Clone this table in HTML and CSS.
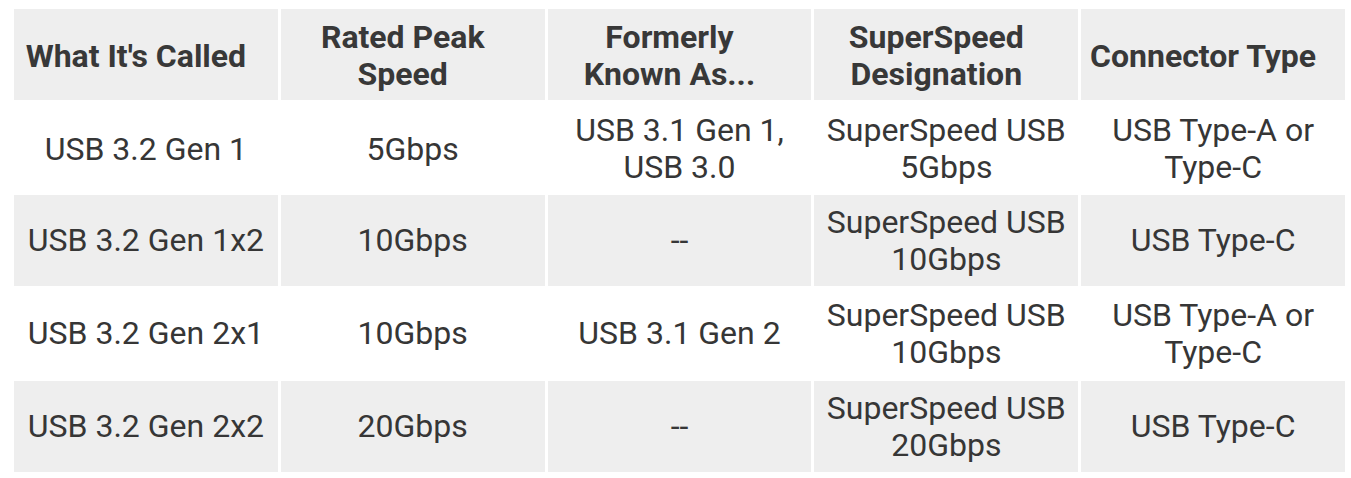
FILE: index.html
```html
<!DOCTYPE html>
<html lang="en">
<head>
<meta charset="utf-8">
<title>USB 3.2 naming</title>
<link rel="stylesheet" href="styles.css">
</head>
<body>
<table class="usb-table">
  <thead>
    <tr class="row-shaded">
      <th>What It's Called</th>
      <th>Rated Peak<br>Speed</th>
      <th>Formerly<br>Known As...</th>
      <th>SuperSpeed<br>Designation</th>
      <th>Connector Type</th>
    </tr>
  </thead>
  <tbody>
    <tr class="row-first">
      <td>USB 3.2 Gen 1</td>
      <td>5Gbps</td>
      <td>USB 3.1 Gen 1,<br>USB 3.0</td>
      <td>SuperSpeed USB<br>5Gbps</td>
      <td>USB Type-A or<br>Type-C</td>
    </tr>
    <tr class="row-shaded">
      <td>USB 3.2 Gen 1x2</td>
      <td>10Gbps</td>
      <td>--</td>
      <td>SuperSpeed USB<br>10Gbps</td>
      <td>USB Type-C</td>
    </tr>
    <tr>
      <td>USB 3.2 Gen 2x1</td>
      <td>10Gbps</td>
      <td>USB 3.1 Gen 2</td>
      <td>SuperSpeed USB<br>10Gbps</td>
      <td>USB Type-A or<br>Type-C</td>
    </tr>
    <tr class="row-shaded">
      <td>USB 3.2 Gen 2x2</td>
      <td>20Gbps</td>
      <td>--</td>
      <td>SuperSpeed USB<br>20Gbps</td>
      <td>USB Type-C</td>
    </tr>
  </tbody>
</table>
</body>
</html>
```

FILE: styles.css
```css
html, body {
  margin: 0;
  padding: 0;
  background: #ffffff;
}

body {
  padding: 7px 0 0 11px;
  font-family: Roboto, "Liberation Sans", Arial, sans-serif;
  color: #363636;
}

.usb-table {
  width: 1337px;
  table-layout: fixed;
  border-collapse: separate;
  border-spacing: 3px 2px;
}

.usb-table th,
.usb-table td {
  height: 91px;
  padding: 0 4px;
  text-align: center;
  vertical-align: middle;
  font-size: 32px;
  line-height: 37px;
}

.usb-table th {
  height: 88px;
  font-weight: 700;
  color: #383838;
  padding: 3px 20px 0 0;
}

.usb-table td {
  font-weight: 400;
}

.usb-table .row-first td {
  height: 88px;
  padding-top: 3px;
}

.row-shaded th,
.row-shaded td {
  background: #eeeeee;
}
```
